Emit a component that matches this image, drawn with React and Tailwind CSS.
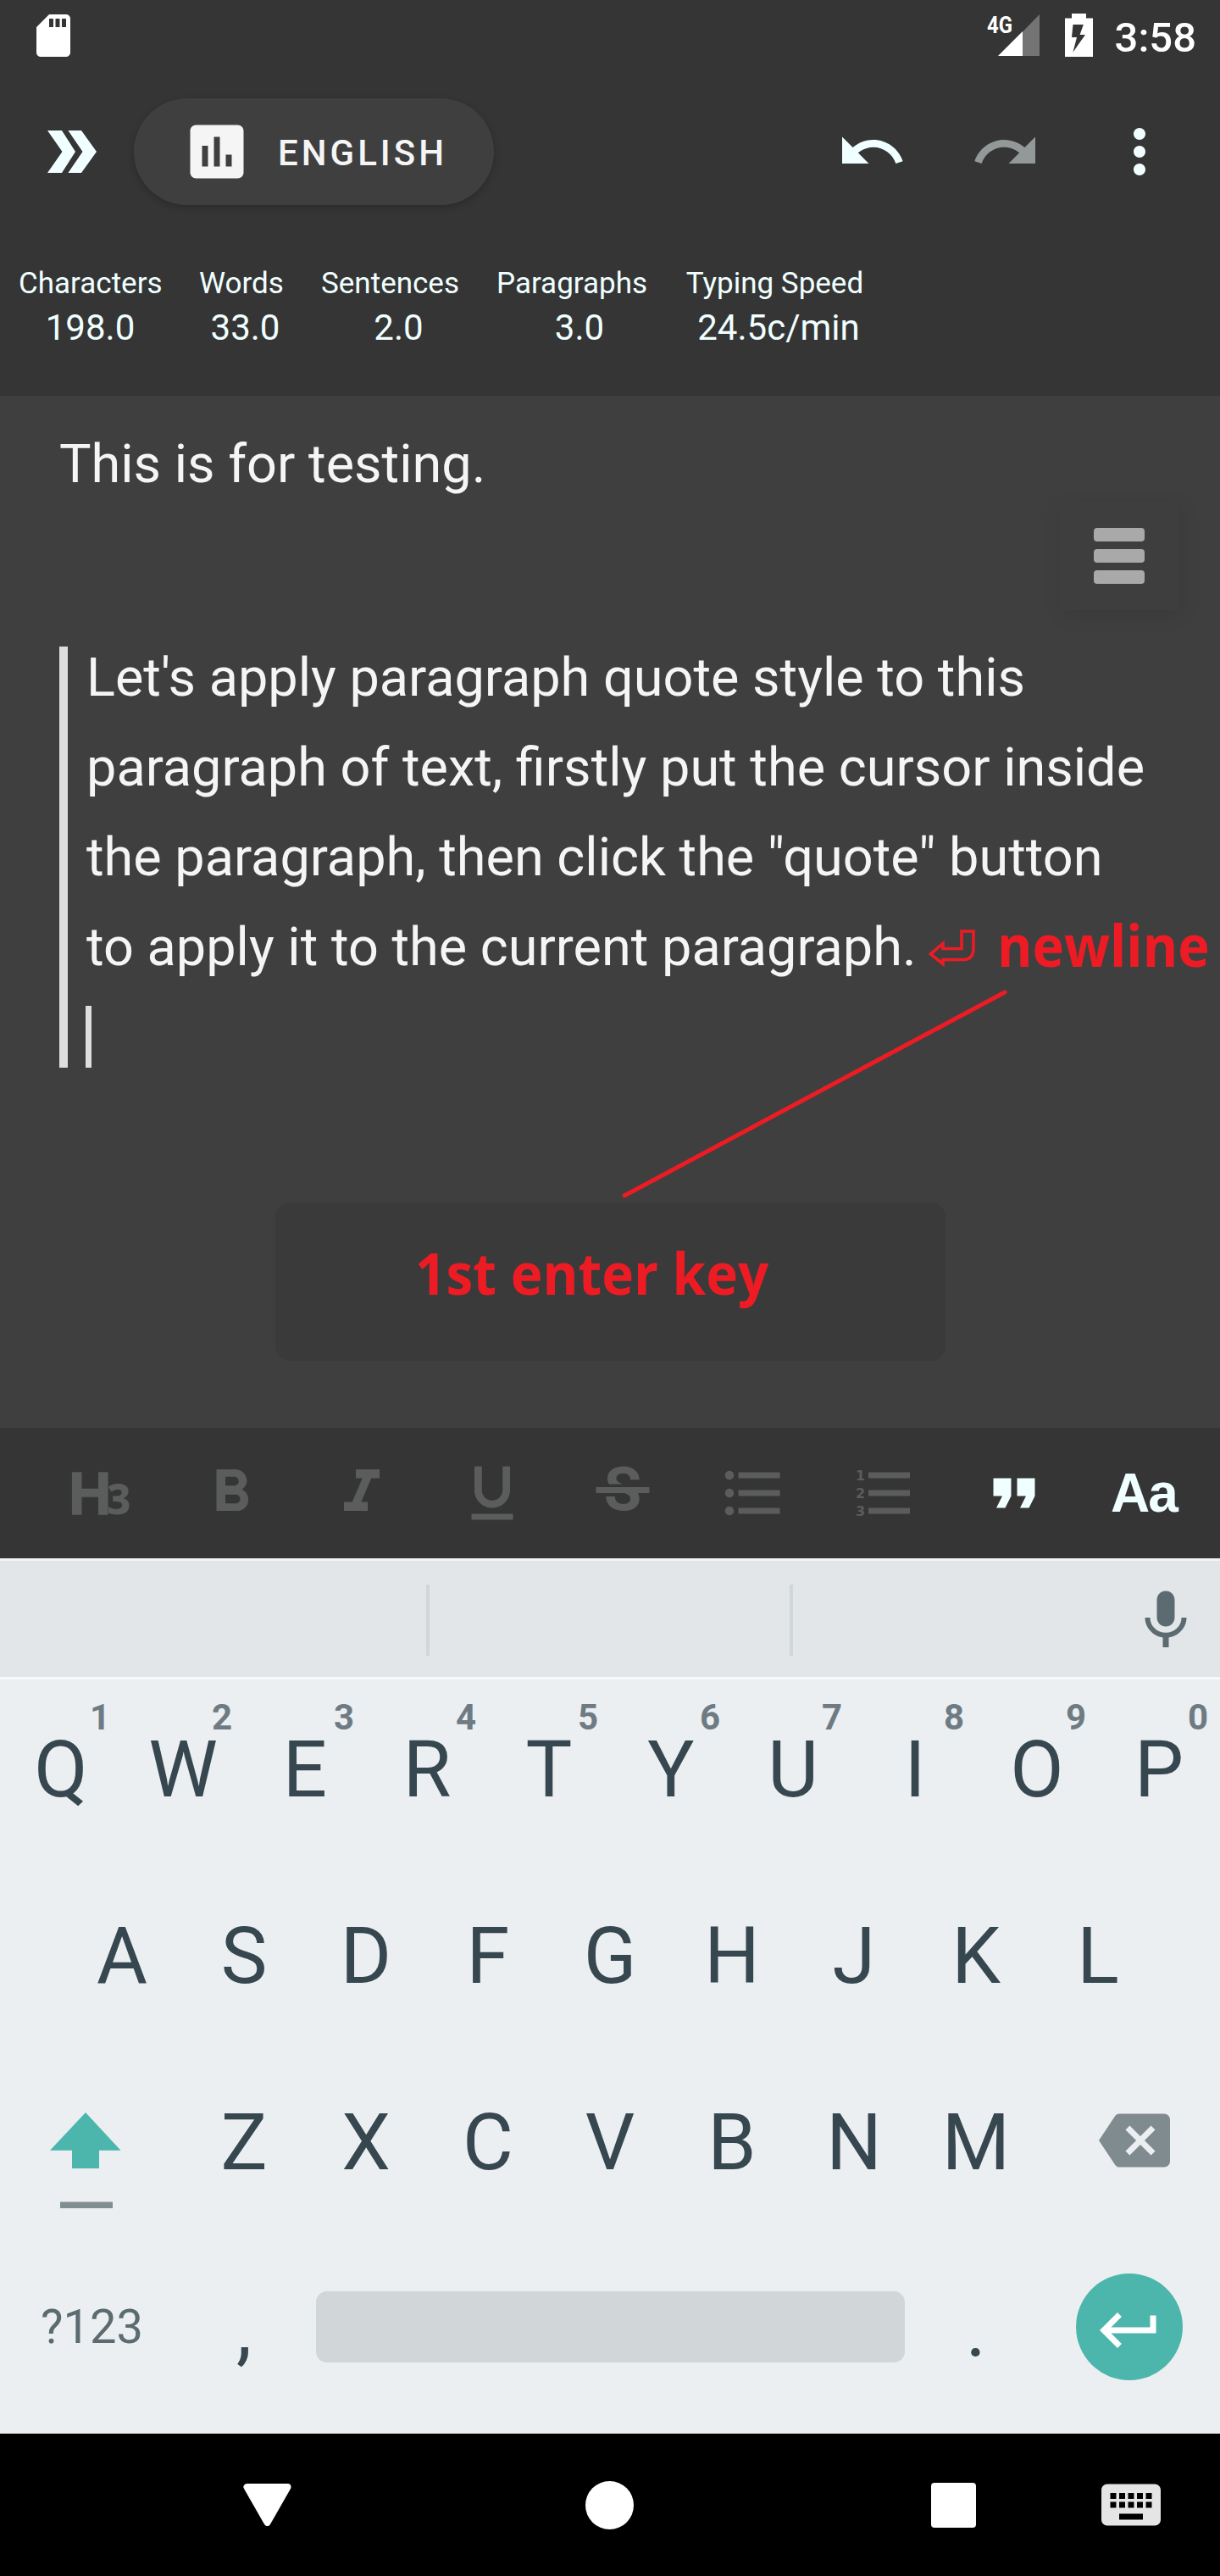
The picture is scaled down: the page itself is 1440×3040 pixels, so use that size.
import { MdSdCard, MdAssessment, MdUndo, MdRedo, MdMoreVert, MdFormatBold, MdFormatItalic, MdFormatUnderlined, MdStrikethroughS, MdFormatListBulleted, MdFormatQuote, MdKeyboardVoice, MdKeyboardReturn, MdBackspace, MdKeyboard } from "react-icons/md";

const stats = [
  ["Characters", "198.0", "ml-[22px] w-[169px]", "pl-0"],
  ["Words", "33.0", "ml-[44px] w-[100px]", "pl-[9px]"],
  ["Sentences", "2.0", "ml-[44px] w-[163px]", "pl-[20px]"],
  ["Paragraphs", "3.0", "ml-[44px] w-[177px]", "pl-[19px]"],
  ["Typing Speed", "24.5c/min", "ml-[46px] w-[211px]", "pl-[9px]"],
];

function StatusBar() {
  return (
    <div className="flex h-[90px] items-start pt-[12px] pl-[33px] pr-[28px] text-white">
      <MdSdCard size={60} />
      <svg className="ml-auto h-[60px] w-[130px]" viewBox="1162 12 130 60">
        <text x="1165" y="39" fontFamily="Roboto" fontWeight="700" fontSize="28" textLength="30" lengthAdjust="spacingAndGlyphs" fill="#fff">4G</text>
        <path d="M1207 37.500L1227 17V66H1207Z" fill="#747474" />
        <path d="M1178 66L1207 37V66Z" fill="#fff" />
        <path fillRule="evenodd" fill="#fff" d="M1265 16h17v5.500h8V67h-33V21.500h8ZM1266.500 29L1265 44h6l-4.600 17.700L1281 41h-6.400l4.200-12Z" />
      </svg>
      <span className="ml-[24px] mt-[4px] text-[49px] leading-[58px] font-medium">3:58</span>
    </div>
  );
}

function AppBar() {
  return (
    <div className="flex h-[178px] items-center text-[#f0ffff]">
      <svg className="ml-[56px] h-[50px] w-[58px]" viewBox="56 154 58 50" fill="currentColor">
        <path d="M56 154H73L89 179L73 204H56L73.500 179ZM80.400 154H96L114 179L96 204H80.400L97.500 179Z" />
      </svg>
      <div className="ml-[44px] flex h-[126px] w-[425px] items-center rounded-full bg-[#3f3f3f] pl-[56px] text-[#f5f5f5] shadow-[0_3px_8px_rgba(0,0,0,0.2)]">
        <MdAssessment size={84} />
        <span className="ml-[30px] mt-[2px] text-[42px] font-medium tracking-[4px]">ENGLISH</span>
      </div>
      <MdUndo size={84} className="ml-[404px]" />
      <MdRedo size={84} className="ml-[74px] text-[#939898]" />
      <MdMoreVert size={84} className="ml-[74px]" />
    </div>
  );
}

function Stats() {
  return (
    <div className="flex h-[199px] pt-[46px] text-[#f0ffff]">
      {stats.map(([label, value, box, shift]) => (
        <div key={label} className={box + " text-center whitespace-nowrap"}>
          <div className="text-[35px] leading-[42px]">{label}</div>
          <div className={shift + " mt-[6px] text-[42px] leading-[50px]"}>{value}</div>
        </div>
      ))}
    </div>
  );
}

function Editor() {
  return (
    <div className="relative h-[1218px] bg-[#3f3f3f] text-[#f5f5f5]">
      <div className="pt-[28px] pl-[70px] text-[63px] leading-[106px]">This is for testing.</div>
      <div className="mt-[162px] ml-[70px] flex h-[497px] flex-col border-l-[10px] border-[#dedede] pl-[21px] text-[63px] leading-[106px] whitespace-nowrap">
        <p className="-mt-[16px] pl-px">
          Let's apply paragraph quote style to this<br />
          paragraph of text, firstly put the cursor inside<br />
          the paragraph, then click the "quote" button<br />
          to apply it to the current paragraph.
        </p>
        <div className="mt-[16px] h-[73px] w-[7px] bg-[#dedede]" />
      </div>
      <div className="absolute top-[125px] left-[1250px] flex h-[128px] w-[141px] flex-col items-center justify-center gap-[9px] rounded-[6px] bg-[#3e3e3e] shadow-[4px_6px_24px_rgba(0,0,0,0.09)]">
        <span className="h-[16px] w-[60px] rounded-[4px] bg-[#a9a9a9]" />
        <span className="h-[16px] w-[60px] rounded-[4px] bg-[#a9a9a9]" />
        <span className="h-[16px] w-[60px] rounded-[4px] bg-[#a9a9a9]" />
      </div>
      <div className="absolute top-[952px] left-[325px] flex h-[187px] w-[791px] items-start rounded-[18px] bg-[#3a3a3a] pt-[37px] pl-[165px]">
        <span className="origin-left scale-x-[0.94] font-['Open_Sans'] text-[68px] leading-[92px] font-bold whitespace-nowrap text-[#ed1c24]">1st enter key</span>
      </div>
      <svg className="absolute top-[600px] left-[720px] h-[360px] w-[720px]" viewBox="720 1067 720 360" fill="none" stroke="#ed1c24">
        <path d="M1186 1171L737 1411" strokeWidth="5" strokeLinecap="round" />
        <path d="M1135 1099H1149V1119Q1149 1132.500 1137 1132.500H1113V1137.500L1098.500 1126L1113 1113.500V1119.500H1135Z" strokeWidth="3.600" />
      </svg>
      <span className="absolute top-[602px] left-[1177px] origin-left scale-x-[0.93] font-['Open_Sans'] text-[68px] leading-[92px] font-bold text-[#ed1c24]">newline</span>
    </div>
  );
}

function Toolbar() {
  const cell = "flex w-[154px] items-center justify-center";
  return (
    <div className="flex h-[154px] items-stretch bg-[#353535] pl-[42px] text-[#5b5d5c]">
      <div className={cell}>
        <svg className="h-[84px] w-[84px]" viewBox="77 1720 84 84" fill="currentColor" fontWeight="700">
          <text x="81" y="1786.500" fontFamily="Liberation Sans" fontSize="70" stroke="currentColor" strokeWidth="1.500">H</text>
          <text x="126.500" y="1786.500" fontFamily="Open Sans" fontSize="48" stroke="currentColor" strokeWidth="0.800">3</text>
        </svg>
      </div>
      <div className={cell}><MdFormatBold size={84} /></div>
      <div className={cell}><MdFormatItalic size={84} /></div>
      <div className={cell}><MdFormatUnderlined size={84} /></div>
      <div className={cell}><MdStrikethroughS size={84} /></div>
      <div className={cell}><MdFormatListBulleted size={84} /></div>
      <div className={cell}>
        <svg className="h-[84px] w-[84px]" viewBox="1001.500 1720 84 84" fill="currentColor" fontFamily="DejaVu Sans" fontWeight="700" fontSize="16">
          <path d="M1025.500 1737.500h49v7h-49zM1025.500 1758.500h49v7h-49zM1025.500 1779.500h49v7h-49z" />
          <text x="1010.500" y="1746.500">1</text>
          <text x="1010.500" y="1767.500">2</text>
          <text x="1010.500" y="1788.500">3</text>
        </svg>
      </div>
      <div className={cell + " text-[#f0ffff]"}><MdFormatQuote size={84} /></div>
      <div className={cell + " text-[#f0ffff]"}>
        <span className="-mt-[1px] -ml-[2px] font-['Liberation_Sans'] text-[64px] leading-[84px] font-bold tracking-[-2px]">Aa</span>
      </div>
    </div>
  );
}

function Key({ label, hint }) {
  return (
    <div className="relative flex h-[220px] w-[144px] items-center justify-center pt-[5px] text-[92px] leading-none text-[#37474f]">
      {label}
      {hint && <span className="absolute top-[30px] left-[90px] w-[56px] text-center text-[42px] leading-[42px] font-bold text-[#6e7b82]">{hint}</span>}
    </div>
  );
}

function Keyboard() {
  return (
    <div className="h-[1033px] overflow-hidden bg-[#ebeff2]">
      <div className="flex h-[143px] items-center border-y-[3px] border-t-[#f1f3f4] border-b-[#f7f9fa] bg-[#e2e6e9]">
        <div className="mt-[2px] ml-[503px] h-[84px] w-[4px] bg-[#d1d6d9]" />
        <div className="mt-[2px] ml-[425px] h-[84px] w-[4px] bg-[#d1d6d9]" />
        <MdKeyboardVoice size={84} className="-mt-[4px] ml-[398px] text-[#5c6b72]" />
      </div>
      <div className="-mt-[6px] flex">
        {"QWERTYUIOP".split("").map((k, i) => <Key key={k} label={k} hint={String((i + 1) % 10)} />)}
      </div>
      <div className="flex pl-[72px]">
        {"ASDFGHJKL".split("").map((k) => <Key key={k} label={k} />)}
      </div>
      <div className="flex items-center">
        <div className="w-[216px] pl-[59px]">
          <svg className="mt-[47px] h-[114px] w-[84px]" viewBox="59 2493 84 114">
            <path d="M101 2493L142.500 2537.700H117V2559H85V2537.700H59Z" fill="#4db6ac" />
            <path d="M71 2598.500H133V2606H71Z" fill="#808d91" />
          </svg>
        </div>
        {"ZXCVBNM".split("").map((k) => <Key key={k} label={k} />)}
        <MdBackspace size={84} className="ml-[73px] text-[#808b8f]" />
      </div>
      <div className="flex h-[220px] items-center">
        <div className="w-[216px] pl-[48px] text-[56px] leading-none text-[#5c6b70]">?123</div>
        <Key label="," />
        <div className="mr-[12px] ml-[13px] h-[84px] w-[695px] rounded-[13px] bg-[#d1d6d9]" />
        <Key label="." />
        <div className="ml-[46px] flex h-[126px] w-[126px] items-center justify-center rounded-full bg-[#4db6ac] text-white">
          <MdKeyboardReturn size={84} className="mt-[7px]" />
        </div>
      </div>
    </div>
  );
}

function NavBar() {
  return (
    <div className="flex h-[168px] items-center bg-black">
      <svg className="ml-[287px] h-[50px] w-[57px]" viewBox="0 0 57 50" fill="#fff" stroke="#fff" strokeWidth="8" strokeLinejoin="round">
        <path d="M4.500 4H52.500L28.500 46Z" />
      </svg>
      <div className="ml-[347px] h-[57px] w-[57px] rounded-full bg-white" />
      <div className="ml-[351px] h-[53px] w-[53px] rounded-[4px] bg-white" />
      <MdKeyboard size={84} className="ml-[141px] text-[#e5e5e5]" />
    </div>
  );
}

export default function App() {
  return (
    <div className="h-[3040px] w-[1440px] overflow-hidden bg-[#353535] font-[Roboto,sans-serif]">
      <StatusBar />
      <AppBar />
      <Stats />
      <Editor />
      <Toolbar />
      <Keyboard />
      <NavBar />
    </div>
  );
}
